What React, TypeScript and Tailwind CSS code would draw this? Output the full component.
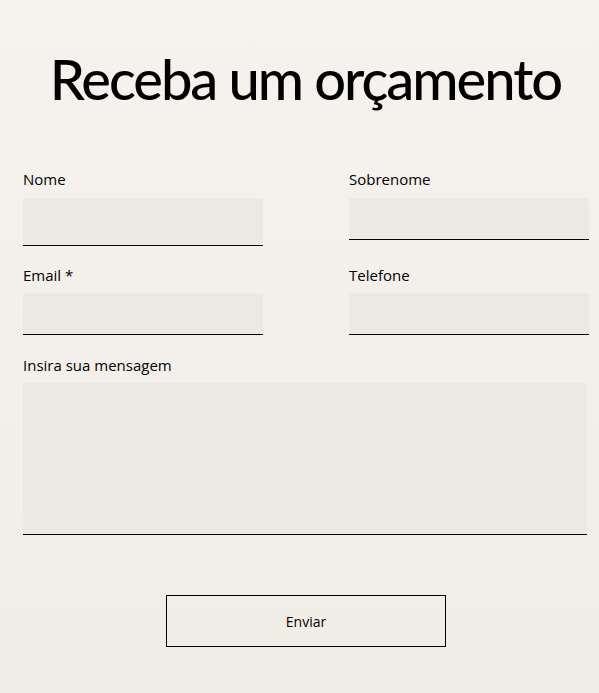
export default function App() {
  const label = "block text-[15px] leading-[18px] text-black";
  const body = { fontFamily: "'Open Sans', Lato, sans-serif" };

  return (
    <div
      className="min-h-[693px] w-[599px] bg-gradient-to-b from-[#f6f3ef] to-[#f0ede7] text-black"
      style={body}
    >
      <h1
        className="whitespace-nowrap pl-[12px] pt-[43px] text-center text-[56px] font-medium leading-[72px] tracking-[-2px]"
        style={{ fontFamily: "Lato, 'Noto Sans', sans-serif" }}
      >
        Receba um orçamento
      </h1>

      <form className="pl-[23px] pt-[55px]">
        <div className="grid grid-cols-[240px_240px] gap-x-[86px]">
          <div>
            <label className={label}>Nome</label>
            <div className="mt-[10px] h-[48px] border-b border-black bg-[#ece9e2]" />
          </div>
          <div>
            <label className={label}>Sobrenome</label>
            <div className="mt-[10px] h-[42px] border-b border-black bg-[#ece9e2]" />
          </div>
          <div className="mt-[20px]">
            <label className={label}>Email *</label>
            <div className="mt-[9px] h-[42px] border-b border-black bg-[#ece9e2]" />
          </div>
          <div className="mt-[20px]">
            <label className={label}>Telefone</label>
            <div className="mt-[9px] h-[42px] border-b border-black bg-[#ece9e2]" />
          </div>
        </div>

        <div className="mt-[21px]">
          <label className={label}>Insira sua mensagem</label>
          <div className="mt-[9px] h-[152px] w-[564px] border-b border-black bg-[#ece9e2]" />
        </div>

        <div className="mt-[60px] pl-[143px]">
          <button
            type="button"
            className="h-[52px] w-[280px] border border-black text-[14px] text-black"
          >
            Enviar
          </button>
        </div>
      </form>
    </div>
  );
}
